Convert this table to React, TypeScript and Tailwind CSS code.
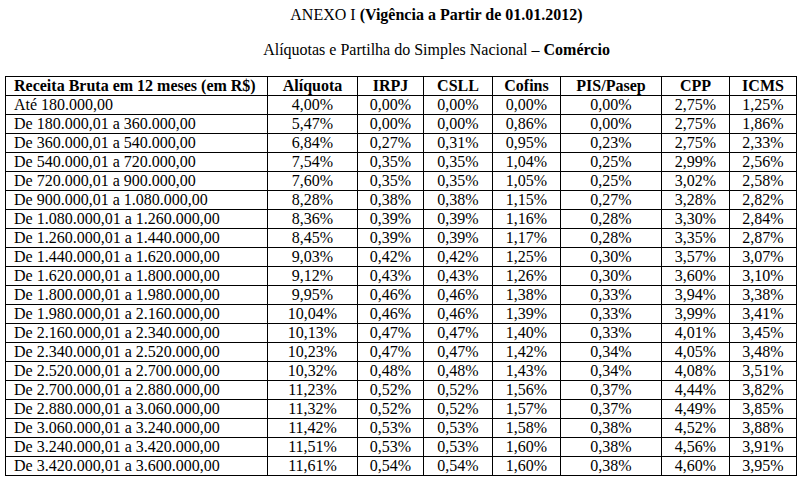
const HEAD = ['Alíquota', 'IRPJ', 'CSLL', 'Cofins', 'PIS/Pasep', 'CPP', 'ICMS'];

const ROWS: [string, ...string[]][] = [
    ['Até 180.000,00', '4,00%', '0,00%', '0,00%', '0,00%', '0,00%', '2,75%', '1,25%'],
    ['De 180.000,01 a 360.000,00', '5,47%', '0,00%', '0,00%', '0,86%', '0,00%', '2,75%', '1,86%'],
    ['De 360.000,01 a 540.000,00', '6,84%', '0,27%', '0,31%', '0,95%', '0,23%', '2,75%', '2,33%'],
    ['De 540.000,01 a 720.000,00', '7,54%', '0,35%', '0,35%', '1,04%', '0,25%', '2,99%', '2,56%'],
    ['De 720.000,01 a 900.000,00', '7,60%', '0,35%', '0,35%', '1,05%', '0,25%', '3,02%', '2,58%'],
    ['De 900.000,01 a 1.080.000,00', '8,28%', '0,38%', '0,38%', '1,15%', '0,27%', '3,28%', '2,82%'],
    ['De 1.080.000,01 a 1.260.000,00', '8,36%', '0,39%', '0,39%', '1,16%', '0,28%', '3,30%', '2,84%'],
    ['De 1.260.000,01 a 1.440.000,00', '8,45%', '0,39%', '0,39%', '1,17%', '0,28%', '3,35%', '2,87%'],
    ['De 1.440.000,01 a 1.620.000,00', '9,03%', '0,42%', '0,42%', '1,25%', '0,30%', '3,57%', '3,07%'],
    ['De 1.620.000,01 a 1.800.000,00', '9,12%', '0,43%', '0,43%', '1,26%', '0,30%', '3,60%', '3,10%'],
    ['De 1.800.000,01 a 1.980.000,00', '9,95%', '0,46%', '0,46%', '1,38%', '0,33%', '3,94%', '3,38%'],
    ['De 1.980.000,01 a 2.160.000,00', '10,04%', '0,46%', '0,46%', '1,39%', '0,33%', '3,99%', '3,41%'],
    ['De 2.160.000,01 a 2.340.000,00', '10,13%', '0,47%', '0,47%', '1,40%', '0,33%', '4,01%', '3,45%'],
    ['De 2.340.000,01 a 2.520.000,00', '10,23%', '0,47%', '0,47%', '1,42%', '0,34%', '4,05%', '3,48%'],
    ['De 2.520.000,01 a 2.700.000,00', '10,32%', '0,48%', '0,48%', '1,43%', '0,34%', '4,08%', '3,51%'],
    ['De 2.700.000,01 a 2.880.000,00', '11,23%', '0,52%', '0,52%', '1,56%', '0,37%', '4,44%', '3,82%'],
    ['De 2.880.000,01 a 3.060.000,00', '11,32%', '0,52%', '0,52%', '1,57%', '0,37%', '4,49%', '3,85%'],
    ['De 3.060.000,01 a 3.240.000,00', '11,42%', '0,53%', '0,53%', '1,58%', '0,38%', '4,52%', '3,88%'],
    ['De 3.240.000,01 a 3.420.000,00', '11,51%', '0,53%', '0,53%', '1,60%', '0,38%', '4,56%', '3,91%'],
    ['De 3.420.000,01 a 3.600.000,00', '11,61%', '0,54%', '0,54%', '1,60%', '0,38%', '4,60%', '3,95%'],
];

const cell = 'border border-black p-0 h-[18px] leading-[18px] whitespace-nowrap';

export default function App() {
    return (
        <div className="w-[801px] h-[481px] bg-white text-black text-[16px] font-['Liberation_Serif',serif] overflow-hidden">
            <div className="pt-[6px] pl-[72px] text-center leading-[18px]">
                ANEXO I <b>(Vigência a Partir de 01.01.2012)</b>
            </div>
            <div className="mt-[17px] pl-[72px] text-center leading-[18px]">
                Alíquotas e Partilha do Simples Nacional – <b>Comércio</b>
            </div>

            <table className="mt-[17px] ml-[5px] border-collapse table-fixed w-[791px]">
                <colgroup>
                    <col className="w-[262px]" />
                    <col className="w-[90px]" />
                    <col className="w-[66px]" />
                    <col className="w-[69px]" />
                    <col className="w-[68px]" />
                    <col className="w-[101px]" />
                    <col className="w-[68px]" />
                    <col className="w-[67px]" />
                </colgroup>
                <thead>
                    <tr>
                        <th className={`${cell} text-left pl-[8px] font-bold`}>Receita Bruta em 12 meses (em R$)</th>
                        {HEAD.map((h) => (
                            <th key={h} className={`${cell} text-center font-bold`}>
                                {h}
                            </th>
                        ))}
                    </tr>
                </thead>
                <tbody>
                    {ROWS.map(([range, ...vals]) => (
                        <tr key={range}>
                            <td className={`${cell} text-left pl-[8px]`}>{range}</td>
                            {vals.map((v, i) => (
                                <td key={i} className={`${cell} text-center`}>
                                    {v}
                                </td>
                            ))}
                        </tr>
                    ))}
                </tbody>
            </table>
        </div>
    );
}
